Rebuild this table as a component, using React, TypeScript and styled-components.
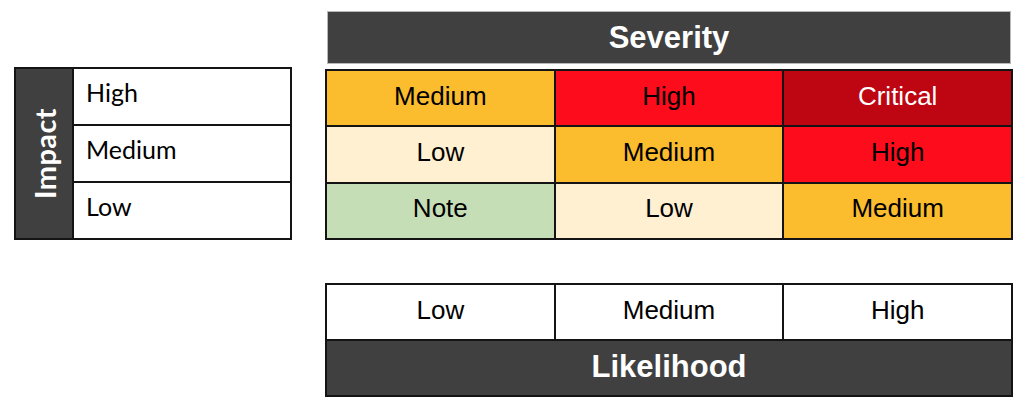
import React from "react";
import styled, { createGlobalStyle } from "styled-components";

const GlobalStyle = createGlobalStyle`
  html, body {
    margin: 0;
    padding: 0;
    background: #ffffff;
  }
  body {
    width: 1024px;
    height: 410px;
    overflow: hidden;
    font-family: "Liberation Sans", Arial, sans-serif;
  }
`;

const LINE = "#141414";
const DARK = "#404040";

type Level = "note" | "low" | "medium" | "high" | "critical";

const levelBg: Record<Level, string> = {
  note: "#c6deb6",
  low: "#fef0d1",
  medium: "#fbbc2d",
  high: "#fd0c1c",
  critical: "#bd0612",
};

const Page = styled.div`
  display: flex;
  align-items: flex-start;
  gap: 33px;
  padding-left: 14px;
`;

const ImpactTable = styled.div`
  margin-top: 67px;
  width: 278px;
  height: 173px;
  box-sizing: border-box;
  border: 2px solid ${LINE};
  display: grid;
  grid-template-columns: 58px 1fr;
`;

const ImpactAxis = styled.div`
  background: ${DARK};
  display: flex;
  align-items: center;
  justify-content: center;
  border-right: 2px solid ${LINE};
`;

const ImpactTitle = styled.span`
  writing-mode: vertical-rl;
  transform: rotate(180deg);
  color: #ffffff;
  font-family: Lato, "Open Sans", sans-serif;
  font-weight: 700;
  font-size: 29px;
  line-height: 1;
  letter-spacing: 0.4px;
`;

const ImpactRows = styled.div`
  display: grid;
  grid-template-rows: repeat(3, 1fr);
  gap: 2px;
  background: ${LINE};
`;

const ImpactRow = styled.div`
  background: #ffffff;
  display: flex;
  align-items: flex-start;
  padding: 8px 0 0 12px;
  font-family: Lato, "Open Sans", sans-serif;
  font-size: 25px;
  line-height: 1.2;
  color: #000000;
`;

const RightColumn = styled.div`
  width: 688px;
  display: flex;
  flex-direction: column;
`;

const SeverityHeader = styled.div`
  margin: 11px 2px 0;
  height: 53px;
  box-sizing: border-box;
  background: ${DARK};
  border: 1px solid #b8b8b8;
  display: flex;
  align-items: center;
  justify-content: center;
  color: #ffffff;
  font-weight: 700;
  font-size: 31px;
`;

const Matrix = styled.div`
  margin-top: 5px;
  height: 171px;
  box-sizing: border-box;
  padding: 2px;
  gap: 2px;
  background: ${LINE};
  display: grid;
  grid-template-columns: repeat(3, 1fr);
  grid-template-rows: repeat(3, 1fr);
`;

const Cell = styled.div<{ $level: Level }>`
  background: ${(p) => levelBg[p.$level]};
  color: ${(p) => (p.$level === "critical" ? "#ffffff" : "#000000")};
  display: flex;
  align-items: center;
  justify-content: center;
  font-size: 26px;
  padding-bottom: 4px;
`;

const LikelihoodBlock = styled.div`
  margin-top: 43px;
  box-sizing: border-box;
  padding: 2px;
  gap: 2px;
  background: ${LINE};
  display: grid;
  grid-template-columns: repeat(3, 1fr);
  grid-template-rows: 54px 54px;
`;

const AxisValue = styled.div`
  background: #ffffff;
  display: flex;
  align-items: center;
  justify-content: center;
  font-size: 26px;
  color: #000000;
  padding-bottom: 3px;
`;

const LikelihoodTitle = styled.div`
  grid-column: 1 / -1;
  background: ${DARK};
  display: flex;
  align-items: center;
  justify-content: center;
  color: #ffffff;
  font-weight: 700;
  font-size: 31px;
  padding-bottom: 2px;
`;

const matrix: { label: string; level: Level }[][] = [
  [
    { label: "Medium", level: "medium" },
    { label: "High", level: "high" },
    { label: "Critical", level: "critical" },
  ],
  [
    { label: "Low", level: "low" },
    { label: "Medium", level: "medium" },
    { label: "High", level: "high" },
  ],
  [
    { label: "Note", level: "note" },
    { label: "Low", level: "low" },
    { label: "Medium", level: "medium" },
  ],
];

export default function App() {
  return (
    <>
      <GlobalStyle />
      <Page>
        <ImpactTable>
          <ImpactAxis>
            <ImpactTitle>Impact</ImpactTitle>
          </ImpactAxis>
          <ImpactRows>
            {["High", "Medium", "Low"].map((l) => (
              <ImpactRow key={l}>{l}</ImpactRow>
            ))}
          </ImpactRows>
        </ImpactTable>
        <RightColumn>
          <SeverityHeader>Severity</SeverityHeader>
          <Matrix>
            {matrix.flat().map((c, i) => (
              <Cell key={i} $level={c.level}>
                {c.label}
              </Cell>
            ))}
          </Matrix>
          <LikelihoodBlock>
            {["Low", "Medium", "High"].map((l) => (
              <AxisValue key={l}>{l}</AxisValue>
            ))}
            <LikelihoodTitle>Likelihood</LikelihoodTitle>
          </LikelihoodBlock>
        </RightColumn>
      </Page>
    </>
  );
}
